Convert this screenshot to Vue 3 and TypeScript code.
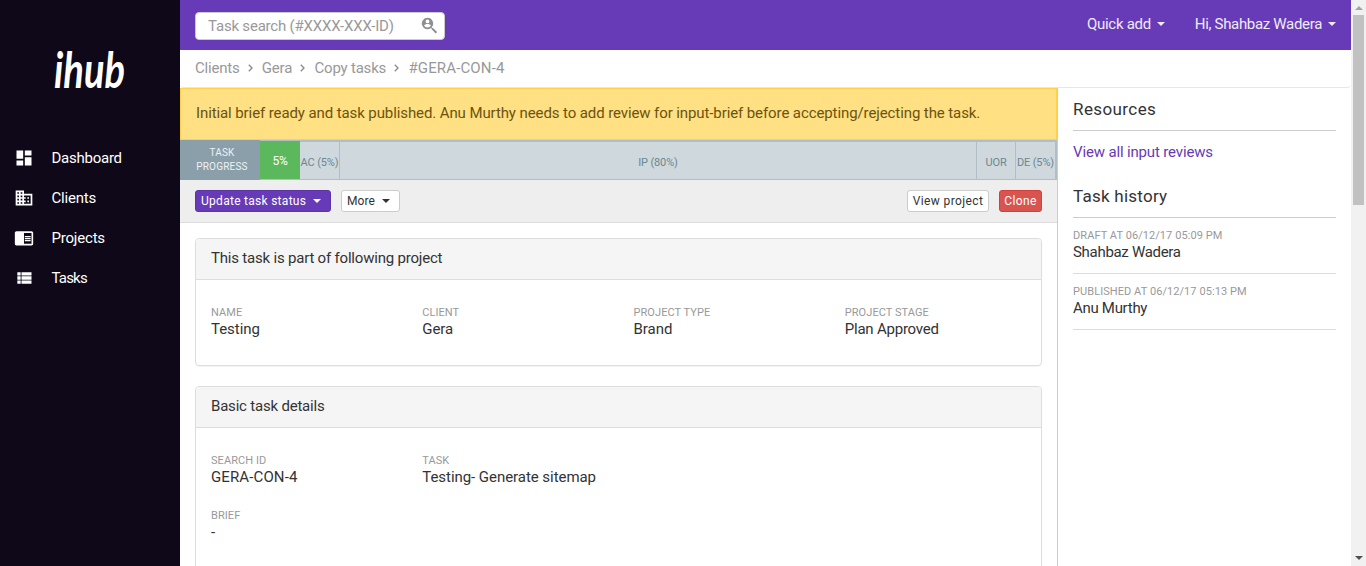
<script setup lang="ts">
interface Field { label: string; value: string; style?: string }
interface Step { label: string; kind: string }

const crumbs: string[] = ['Clients', 'Gera', 'Copy tasks', '#GERA-CON-4']
const steps: Step[] = [
  { label: '5%', kind: 'done' },
  { label: 'AC (5%)', kind: 'ac' },
  { label: 'IP (80%)', kind: 'ip' },
  { label: 'UOR', kind: 'uor' },
  { label: 'DE (5%)', kind: 'de' },
]
const project: Field[] = [
  { label: 'NAME', value: 'Testing' },
  { label: 'CLIENT', value: 'Gera' },
  { label: 'PROJECT TYPE', value: 'Brand' },
  { label: 'PROJECT STAGE', value: 'Plan Approved', style: 'tight' },
]
const details: Field[] = [
  { label: 'SEARCH ID', value: 'GERA-CON-4', style: 'wide' },
  { label: 'TASK', value: 'Testing- Generate sitemap' },
]
const history: Field[] = [
  { label: 'DRAFT AT 06/12/17 05:09 PM', value: 'Shahbaz Wadera', style: 'tight' },
  { label: 'PUBLISHED AT 06/12/17 05:13 PM', value: 'Anu Murthy', style: 'tight' },
]
</script>

<template>
  <div class="page">
    <aside class="sidebar">
      <div class="logo">
        <svg width="120" height="80" viewBox="0 0 120 80" role="img" aria-label="ihub">
          <text x="24" y="58" textLength="71" lengthAdjust="spacingAndGlyphs">ihub</text>
        </svg>
      </div>
      <nav>
        <a class="nav-item">
          <svg viewBox="0 0 24 24"><path d="M3 13h8V3H3v10zm0 8h8v-6H3v6zm10 0h8V11h-8v10zm0-18v6h8V3h-8z" /></svg>
          <span class="nav-dashboard">Dashboard</span>
        </a>
        <a class="nav-item">
          <svg viewBox="0 0 24 24"><path d="M12 7V3H2v18h20V7H12zM6 19H4v-2h2v2zm0-4H4v-2h2v2zm0-4H4V9h2v2zm0-4H4V5h2v2zm4 12H8v-2h2v2zm0-4H8v-2h2v2zm0-4H8V9h2v2zm0-4H8V5h2v2zm10 12h-8v-2h2v-2h-2v-2h2v-2h-2V9h8v10zm-2-8h-2v2h2v-2zm0 4h-2v2h2v-2z" /></svg>
          <span>Clients</span>
        </a>
        <a class="nav-item">
          <svg viewBox="0 0 24 24"><path d="M13 12h7v1.500h-7zm0-2.500h7V11h-7zm0 5h7V16h-7zM21 4H3c-1.100 0-2 .9-2 2v13c0 1.100.9 2 2 2h18c1.100 0 2-.9 2-2V6c0-1.100-.9-2-2-2zm0 15h-9V6h9v13z" /></svg>
          <span>Projects</span>
        </a>
        <a class="nav-item">
          <svg viewBox="0 0 24 24"><path d="M4 14h4v-4H4v4zm0 5h4v-4H4v4zM4 9h4V5H4v4zm5 5h12v-4H9v4zm0 5h12v-4H9v4zM9 5v4h12V5H9z" /></svg>
          <span class="nav-tasks">Tasks</span>
        </a>
      </nav>
    </aside>

    <div class="content">
      <header class="topbar">
        <div class="search">
          <span>Task search (#XXXX-XXX-ID)</span>
          <svg viewBox="0 0 18 18">
            <path fill-rule="evenodd" d="M6.500.8a5.700 5.700 0 1 0 3.500 10.200l.6.500v.8l4.100 4.100 1.400-1.400-4.100-4.100h-.8l-.5-.6A5.700 5.700 0 0 0 6.500.8zm0 1.700a1.900 1.900 0 1 1 0 3.800 1.900 1.900 0 0 1 0-3.800zm0 8a4.200 4.200 0 0 1-3.400-1.800c.1-1.100 2.200-1.700 3.400-1.700s3.300.6 3.400 1.700a4.200 4.200 0 0 1-3.400 1.800z" />
          </svg>
        </div>
        <div class="user-menu">
          <span class="menu">Quick add<i class="caret" /></span>
          <span class="menu account">Hi, Shahbaz Wadera<i class="caret" /></span>
        </div>
      </header>

      <div class="breadcrumb">
        <template v-for="(c, i) in crumbs" :key="c">
          <svg v-if="i" width="5" height="8" viewBox="0 0 5 8"><path d="M.8.8 4 4 .8 7.200" /></svg>
          <span :class="{ current: i === crumbs.length - 1 }">{{ c }}</span>
        </template>
      </div>

      <div class="columns">
        <main>
          <div class="alert">Initial brief ready and task published. Anu Murthy needs to add review for input-brief before accepting/rejecting the task.</div>
          <div class="progress">
            <div class="progress-title">TASK<br>PROGRESS</div>
            <div class="steps">
              <div v-for="s in steps" :key="s.label" class="step" :class="s.kind">{{ s.label }}</div>
            </div>
          </div>
          <div class="toolbar">
            <button class="btn primary">Update task status<i class="caret" /></button>
            <button class="btn more">More<i class="caret" /></button>
            <span class="spacer" />
            <button class="btn view">View project</button>
            <button class="btn danger">Clone</button>
          </div>
          <div class="panels">
            <section class="panel">
              <h3>This task is part of following project</h3>
              <div class="fields">
                <div v-for="f in project" :key="f.label" class="field">
                  <small>{{ f.label }}</small><p :class="f.style">{{ f.value }}</p>
                </div>
              </div>
            </section>
            <section class="panel">
              <h3>Basic task details</h3>
              <div class="fields">
                <div v-for="f in details" :key="f.label" class="field">
                  <small>{{ f.label }}</small><p :class="f.style">{{ f.value }}</p>
                </div>
              </div>
              <div class="fields brief">
                <div class="field"><small>BRIEF</small><p>-</p></div>
              </div>
            </section>
          </div>
        </main>

        <aside class="side">
          <h2 class="resources">Resources</h2>
          <a class="review">View all input reviews</a>
          <h2>Task history</h2>
          <div v-for="h in history" :key="h.label" class="event">
            <small>{{ h.label }}</small><p :class="h.style">{{ h.value }}</p>
          </div>
        </aside>
      </div>
    </div>

    <div class="scrollbar">
      <i class="arrow up" />
      <div class="thumb" />
      <i class="arrow down" />
    </div>
  </div>
</template>

<style>
html, body { margin: 0; overflow: hidden; }
</style>

<style scoped>
* { box-sizing: border-box; }
.page {
  display: flex; width: 1366px; height: 566px; overflow: hidden; background: #fff;
  font: 15px/20px Roboto, "Liberation Sans", sans-serif; color: #333; letter-spacing: -0.2px;
}
h2, h3, p { margin: 0; font-weight: 400; }
.sidebar { width: 180px; flex: none; background: #0f0818; color: #fff; }
.logo { height: 138px; padding: 30px 0 0 30px; }
.logo svg { display: block; }
.logo text { font: italic 700 50px Lato, sans-serif; fill: #fff; letter-spacing: 0; }
.nav-item { display: flex; align-items: center; height: 40px; padding-left: 14px; }
.nav-item svg { width: 20px; height: 20px; fill: #fff; margin-right: 17.500px; }
.nav-dashboard { letter-spacing: -.25px; }
.nav-tasks { letter-spacing: -.8px; }
.content { width: 1171px; flex: none; }
.topbar { display: flex; justify-content: space-between; height: 50px; padding: 12px 15px 0; background: #673ab7; }
.search {
  display: flex; justify-content: space-between; width: 250px; height: 28px; padding: 3px 5px 0 12px;
  border: 1px solid #ccc; border-radius: 4px; background: #fff; color: #999;
}
.search svg { width: 18px; height: 18px; margin-top: 1px; fill: #8f8f8f; }
.user-menu { display: flex; gap: 30px; padding-top: 2px; color: #f0ebf8; }
.menu { display: flex; align-items: center; height: 20px; letter-spacing: -.3px; }
.account { letter-spacing: -.32px; }
.caret { display: inline-block; width: 0; height: 0; border: 4px solid transparent; border-top-color: currentColor; border-bottom: 0; margin-left: 6px; }
.breadcrumb {
  display: flex; align-items: center; height: 38px; padding: 0 15px 1px;
  border-bottom: 1px solid #e7e7e7; border-radius: 0 0 4px 4px; color: #999;
}
.breadcrumb svg { margin: 0 9px 0 8.300px; fill: none; stroke: #888; stroke-width: 1.300; }
.breadcrumb .current { letter-spacing: .15px; }
.columns { display: flex; height: 478px; }
main { width: 878px; flex: none; border-right: 1px solid #ccc; }
.alert { height: 52px; padding: 14px 15px 0; border: 1px solid #ffd04a; background: #ffe082; color: #6c5310; white-space: nowrap; letter-spacing: -.1px; }
.progress { display: flex; height: 40px; background: #b0bec5; }
.progress-title { width: 80px; padding: 6px 0 0 4px; background: #8a9fa9; color: #eef1f3; font-size: 10px; line-height: 14px; text-align: center; letter-spacing: .2px; }
.steps { display: flex; flex: 1; padding: 1px 1px 1px 0; }
.step { display: flex; align-items: center; justify-content: center; margin-top: 1px; padding-top: 4px; border-right: 1px solid #b0bec5; background: #cfd8dc; color: #6d8793; font-size: 11px; line-height: 16px; white-space: nowrap; letter-spacing: -.15px; }
.done { width: 40px; margin-top: 0; padding: 2px 0 0; border: 0; background: #5cb85c; color: #fff; font-size: 12px; }
.ac { width: 40px; }
.ip { flex: 1; }
.uor { width: 39px; }
.de { width: 40px; }
.toolbar { display: flex; align-items: center; gap: 10px; height: 43px; padding: 0 15px; background: #eee; border-bottom: 1px solid #ddd; }
.spacer { flex: 1; }
.btn {
  display: flex; align-items: center; justify-content: center; height: 22px; padding: 0; border: 1px solid #ccc;
  border-radius: 3px; background: #fff; color: #333; font: 12px/18px Roboto, sans-serif; letter-spacing: .4px; white-space: nowrap;
}
.btn .caret { margin-left: 7px; }
.primary { width: 136px; justify-content: flex-start; padding-left: 5px; background: #673ab7; border-color: #5c34a3; color: #fff; letter-spacing: .28px; }
.more { width: 59px; justify-content: flex-start; padding-left: 5px; letter-spacing: .1px; }
.view { width: 82px; }
.danger { width: 43px; background: #d9534f; border-color: #d43f3a; color: #fff; }
.panels { height: 343px; padding: 15px 15px 0; overflow: hidden; }
.panel { height: 128px; margin-bottom: 20px; border: 1px solid #ddd; border-radius: 4px; box-shadow: 0 1px 1px rgba(0, 0, 0, .05); overflow: hidden; }
.panel + .panel { height: 240px; }
.panel h3 { height: 41px; padding: 9px 15px 0; background: #f5f5f5; border-bottom: 1px solid #ddd; font-size: 15px; line-height: 20px; }
.fields { display: grid; grid-template-columns: repeat(4, 1fr); padding-top: 24px; }
.fields.brief { padding-top: 20px; }
.field { padding-left: 15px; }
small { display: block; font-size: 11px; line-height: 17px; color: #999; letter-spacing: .07px; }
.field p, .event p { line-height: 20px; margin-top: -2px; letter-spacing: -.05px; }
.field p.tight, .event p.tight { letter-spacing: -.22px; }
.event p.tight { letter-spacing: -.3px; }
.field p.wide { letter-spacing: .12px; }
.side { flex: 1; padding: 0 15px; }
.side h2 { height: 43px; padding-top: 11px; border-bottom: 1px solid #ccc; font-size: 17px; line-height: 20px; letter-spacing: .25px; }
.side .resources { letter-spacing: .4px; }
.review { display: block; height: 44px; padding-top: 11px; color: #673ab7; letter-spacing: -.15px; }
.event { height: 56px; padding-top: 9px; border-bottom: 1px solid #ddd; }
.scrollbar { display: flex; flex-direction: column; align-items: center; width: 15px; padding: 6px 0; background: #f1f1f1; }
.thumb { width: 11px; height: 190px; margin-top: 5px; background: #c1c1c1; }
.arrow { width: 0; height: 0; border: 4px solid transparent; }
.up { border-top: 0; border-bottom-color: #a3a3a3; }
.down { margin-top: auto; border-bottom: 0; border-top-color: #505050; }
</style>
